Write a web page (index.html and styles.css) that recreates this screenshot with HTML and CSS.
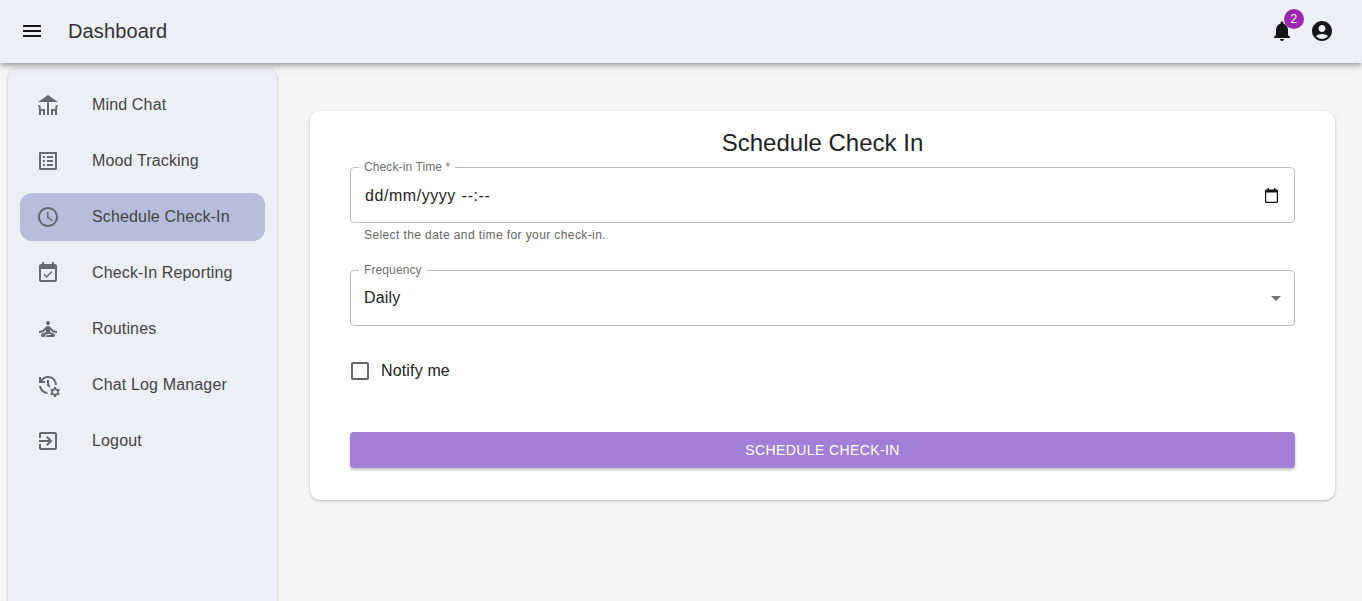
FILE: index.html
```html
<!DOCTYPE html>
<html lang="en">
<head>
<meta charset="utf-8">
<title>Dashboard</title>
<link rel="stylesheet" href="styles.css">
</head>
<body>
<header class="appbar">
  <svg class="icon dark" viewBox="0 0 24 24"><path d="M3 18h18v-2H3v2zm0-5h18v-2H3v2zm0-7v2h18V6H3z"/></svg>
  <h1 class="appbar-title">Dashboard</h1>
  <div class="appbar-actions">
    <span class="bell">
      <svg class="icon dark" viewBox="0 0 24 24"><path d="M12 22c1.1 0 2-.9 2-2h-4c0 1.1.89 2 2 2zm6-6v-5c0-3.07-1.64-5.64-4.5-6.32V4c0-.83-.67-1.5-1.5-1.5s-1.5.67-1.5 1.5v.68C7.63 5.36 6 7.92 6 11v5l-2 2v1h16v-1l-2-2z"/></svg>
      <span class="badge">2</span>
    </span>
    <svg class="icon dark" viewBox="0 0 24 24"><path d="M12 2C6.48 2 2 6.48 2 12s4.48 10 10 10 10-4.48 10-10S17.52 2 12 2zm0 4c1.93 0 3.5 1.57 3.5 3.5S13.93 13 12 13s-3.5-1.57-3.5-3.5S10.07 6 12 6zm0 14c-2.03 0-4.43-.82-6.14-2.88C7.55 15.8 9.68 15 12 15s4.45.8 6.14 2.12C16.43 19.18 14.03 20 12 20z"/></svg>
  </div>
</header>
<div class="shell">
  <nav class="sidebar">
    <a class="nav-item"><svg class="icon" viewBox="0 0 24 24"><path d="M22 9 12 2 2 9h9v13h2V9z"/><path d="M4.14 12l-1.96.37.82 4.37V22h2l.02-4H7v4h2v-6H4.9zm14.96 4H15v6h2v-4h1.98l.02 4h2v-5.26l.82-4.37-1.96-.37z"/></svg><span>Mind Chat</span></a>
    <a class="nav-item"><svg class="icon" viewBox="0 0 24 24"><path d="M19 5v14H5V5h14m1.1-2H3.9c-.5 0-.9.4-.9.9v16.2c0 .4.4.9.9.9h16.2c.4 0 .9-.5.9-.9V3.9c0-.5-.5-.9-.9-.9zM11 7h6v2h-6V7zm0 4h6v2h-6v-2zm0 4h6v2h-6zM7 7h2v2H7zm0 4h2v2H7zm0 4h2v2H7z"/></svg><span>Mood Tracking</span></a>
    <a class="nav-item active"><svg class="icon" viewBox="0 0 24 24"><path d="M11.99 2C6.47 2 2 6.48 2 12s4.47 10 9.99 10C17.52 22 22 17.52 22 12S17.52 2 11.99 2zM12 20c-4.42 0-8-3.58-8-8s3.58-8 8-8 8 3.58 8 8-3.58 8-8 8z"/><path d="M12.5 7H11v6l5.25 3.15.75-1.23-4.5-2.67z"/></svg><span>Schedule Check-In</span></a>
    <a class="nav-item"><svg class="icon" viewBox="0 0 24 24"><path d="M16.53 11.06 15.47 10l-4.88 4.88-2.12-2.12-1.06 1.06L10.59 17l5.94-5.94zM19 3h-1V1h-2v2H8V1H6v2H5c-1.11 0-1.99.9-1.99 2L3 19c0 1.1.89 2 2 2h14c1.1 0 2-.9 2-2V5c0-1.1-.9-2-2-2zm0 16H5V8h14v11z"/></svg><span>Check-In Reporting</span></a>
    <a class="nav-item"><svg class="icon" viewBox="0 0 24 24"><circle cx="12" cy="6" r="2"/><path d="M21 16v-2c-2.24 0-4.16-.96-5.6-2.68l-1.34-1.6c-.38-.46-.94-.72-1.53-.72h-1.05c-.59 0-1.15.26-1.53.72l-1.34 1.6C7.16 13.04 5.24 14 3 14v2c2.77 0 5.19-1.17 7-3.25V15l-3.88 1.55c-.67.27-1.12.93-1.12 1.66C5 19.2 5.8 20 6.79 20H9v-.5c0-1.38 1.12-2.5 2.5-2.5h3c.28 0 .5.22.5.5s-.22.5-.5.5h-3c-.83 0-1.5.67-1.5 1.5v.5h7.21c.99 0 1.79-.8 1.79-1.79 0-.73-.45-1.39-1.12-1.66L14 15v-2.25c1.81 2.08 4.23 3.25 7 3.25z"/></svg><span>Routines</span></a>
    <a class="nav-item"><svg class="icon" viewBox="0 0 24 24"><path d="M22.69 18.37l1.14-1-1-1.73-1.45.49c-.32-.27-.68-.48-1.08-.63L20 14h-2l-.3 1.49c-.4.15-.76.36-1.08.63l-1.45-.49-1 1.73 1.14 1c-.08.5-.08.76 0 1.26l-1.14 1 1 1.73 1.45-.49c.32.27.68.48 1.08.63L18 24h2l.3-1.49c.4-.15.76-.36 1.08-.63l1.45.49 1-1.73-1.14-1c.08-.51.08-.77 0-1.27zM19 21c-1.1 0-2-.9-2-2s.9-2 2-2 2 .9 2 2-.9 2-2 2zM11 7v5.41l2.36 2.36 1.04-1.79-1.4-1.39V7h-2zm10 5c0-4.97-4.03-9-9-9-2.83 0-5.35 1.32-7 3.36V4H3v6h6V8H6.26C7.53 6.19 9.63 5 12 5c3.86 0 7 3.14 7 7h2zm-10.14 6.91c-2.99-.49-5.35-2.9-5.78-5.91H3.06c.5 4.5 4.31 8 8.94 8h.07l-1.21-2.09z"/></svg><span>Chat Log Manager</span></a>
    <a class="nav-item"><svg class="icon" viewBox="0 0 24 24"><path d="M10.09 15.59 11.5 17l5-5-5-5-1.41 1.41L12.67 11H3v2h9.67l-2.58 2.59zM19 3H5c-1.11 0-2 .9-2 2v4h2V5h14v14H5v-4H3v4c0 1.1.89 2 2 2h14c1.1 0 2-.9 2-2V5c0-1.1-.9-2-2-2z"/></svg><span>Logout</span></a>
  </nav>
  <main class="content">
    <section class="card">
      <h2 class="card-title">Schedule Check In</h2>
      <div class="field">
        <label class="field-label">Check-in Time *</label>
        <div class="field-box">
          <span class="date-text"><span>dd/mm/yyyy</span><span>--:--</span></span>
          <svg class="calendar" viewBox="0 0 13 15"><path d="M2.500 0h1.500v1.500h5V0h1.500v1.500H12a1 1 0 0 1 1 1V14a1 1 0 0 1-1 1H1a1 1 0 0 1-1-1V2.500a1 1 0 0 1 1-1h1.500zM1.200 4.500v9.300h10.600V4.500z"/></svg>
        </div>
        <p class="helper">Select the date and time for your check-in.</p>
      </div>
      <div class="field freq">
        <label class="field-label">Frequency</label>
        <div class="field-box">
          <span>Daily</span>
          <svg class="arrow" viewBox="0 0 24 24"><path d="M7 10l5 5 5-5z"/></svg>
        </div>
      </div>
      <label class="check">
        <svg class="check-icon" viewBox="0 0 24 24"><path d="M19 5v14H5V5h14m0-2H5c-1.100 0-2 .9-2 2v14c0 1.100.9 2 2 2h14c1.100 0 2-.9 2-2V5c0-1.100-.9-2-2-2z"/></svg>
        <span>Notify me</span>
      </label>
      <button class="submit" type="button">Schedule Check-In</button>
    </section>
  </main>
</div>
</body>
</html>
```

FILE: styles.css
```css
* { box-sizing: border-box; }
html, body { height: 100%; }
body {
  margin: 0;
  height: 601px;
  overflow: hidden;
  background: #f5f5f5;
  color: rgba(0,0,0,.87);
  font-family: "Liberation Sans", Arial, sans-serif;
  font-size: 16px;
  letter-spacing: .15px;
  display: flex;
  flex-direction: column;
}
.icon { width: 24px; height: 24px; fill: #666a6e; flex: none; display: block; }
.icon.dark { fill: #161616; }

.appbar {
  height: 63px;
  flex: none;
  background: #eceff4;
  display: flex;
  align-items: center;
  padding: 0 28px 2px 20px;
  box-shadow: 0 2px 4px -1px rgba(0,0,0,.2), 0 4px 5px 0 rgba(0,0,0,.14), 0 1px 10px 0 rgba(0,0,0,.12);
  position: relative;
  z-index: 2;
}
.appbar-title { margin: 0 0 0 24px; font-size: 20px; font-weight: 400; color: #333; line-height: 1.6; letter-spacing: .15px; }
.appbar-actions { margin-left: auto; display: flex; gap: 16px; align-items: center; }
.bell { position: relative; display: block; }
.badge {
  position: absolute;
  top: -10px;
  right: -10px;
  width: 20px;
  height: 20px;
  border-radius: 50%;
  background: #9c27b0;
  color: #fff;
  font-size: 12px;
  line-height: 20px;
  text-align: center;
}

.shell { flex: 1; display: flex; min-height: 0; }
.sidebar {
  width: 269px;
  margin: 5px 0 0 8px;
  padding: 13px 12px 0;
  background: #eceff4;
  border-radius: 10px 10px 0 0;
  box-shadow: 0 1px 3px rgba(0,0,0,.3);
  display: flex;
  flex-direction: column;
  gap: 8px;
  flex: none;
}
.nav-item {
  height: 48px;
  display: flex;
  align-items: center;
  padding: 0 16px;
  border-radius: 12px;
  color: #444;
  line-height: 24px;
}
.nav-item .icon { margin-right: 32px; }
.nav-item.active { background: #babdda; }

.content { flex: 1; padding: 48px 27px 0 33px; min-width: 0; }
.card {
  height: 389px;
  background: #fff;
  border-radius: 10px;
  padding: 16px 40px 0;
  box-shadow: 0 1px 3px rgba(0,0,0,.25);
  display: flex;
  flex-direction: column;
}
.card-title { margin: 0; font-size: 24px; font-weight: 400; line-height: 32px; text-align: center; color: #222; height: 40px; letter-spacing: 0; }

.field { position: relative; }
.field.freq { margin-top: 24px; }
.field-label {
  position: absolute;
  top: -7px;
  left: 9px;
  padding: 0 5px;
  background: #fff;
  font-size: 12px;
  line-height: 14px;
  color: #6f6f6f;
  letter-spacing: .11px;
}
.field-box {
  height: 56px;
  border: 1px solid #bfbfbf;
  border-radius: 4px;
  padding: 0 13px;
  display: flex;
  align-items: center;
  justify-content: space-between;
  color: #222;
}
.date-text { display: flex; gap: 6px; padding: 2px 0 0 1px; letter-spacing: .55px; }
.calendar { width: 13px; height: 15px; fill: #111; margin-right: 3px; }
.arrow { width: 24px; height: 24px; fill: #757575; margin-right: -7px; }
.helper {
  margin: 6px 0 0 14px;
  font-size: 12px;
  line-height: 13px;
  letter-spacing: .4px;
  color: #666;
  height: 17px;
}
.check { display: flex; align-items: center; height: 42px; margin-top: 24px; color: #222; }
.check-icon { width: 24px; height: 24px; fill: #666; margin: 0 9px 0 -2px; flex: none; }
.submit {
  height: 36px;
  margin-top: 40px;
  border: 0;
  border-radius: 4px;
  background: #a47fd6;
  color: #fff;
  font: 400 14px/24px "Liberation Sans", Arial, sans-serif;
  letter-spacing: .4px;
  text-transform: uppercase;
  box-shadow: 0 2px 3px rgba(0,0,0,.25);
}
```
